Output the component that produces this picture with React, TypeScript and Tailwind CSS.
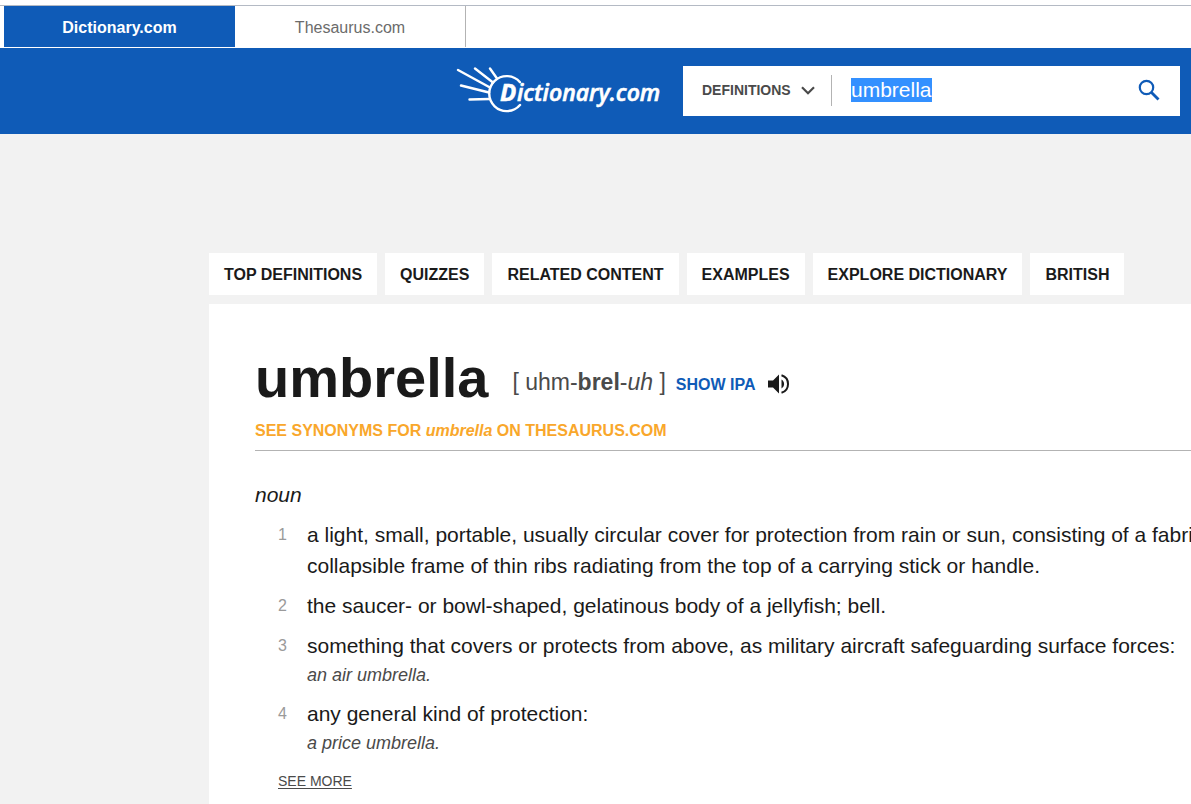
import React, { useEffect, useRef, useState } from "react";

type Definition = {
  text: string;
  example?: string;
};

const SECTIONS = [
  "TOP DEFINITIONS",
  "QUIZZES",
  "RELATED CONTENT",
  "EXAMPLES",
  "EXPLORE DICTIONARY",
  "BRITISH",
];

const DEFINITIONS: Definition[] = [
  {
    text: "a light, small, portable, usually circular cover for protection from rain or sun, consisting of a fabric collapsible frame of thin ribs radiating from the top of a carrying stick or handle.",
  },
  { text: "the saucer- or bowl-shaped, gelatinous body of a jellyfish; bell." },
  {
    text: "something that covers or protects from above, as military aircraft safeguarding surface forces:",
    example: "an air umbrella.",
  },
  { text: "any general kind of protection:", example: "a price umbrella." },
];

const Logo = () => (
  <svg width="206" height="48" viewBox="0 0 206 48" role="img" aria-label="Dictionary.com">
    <g fill="none" stroke="#fff" strokeWidth="2.4" strokeLinecap="round">
      <path d="M64 15.2A17.5 17.5 0 1 0 64 38" />
      <path d="M2 3 34 20.5M19 1.5 37 15.5M34 1.5 41 11.5M5 18.5 33 25.5M13.5 32.5 33.5 32" />
    </g>
    <g
      fill="#fff"
      stroke="#fff"
      fontFamily="'Open Sans', 'Noto Sans', sans-serif"
      fontStyle="italic"
      fontWeight="600"
    >
      <text x="44" y="34" fontSize="24" fontWeight="700" strokeWidth="0.6">
        D
      </text>
      <text x="61" y="34" fontSize="23" strokeWidth="0.6">
        ictionary.com
      </text>
    </g>
  </svg>
);

const SearchBar = () => {
  const [query, setQuery] = useState("umbrella");
  const inputRef = useRef<HTMLInputElement>(null);

  useEffect(() => {
    inputRef.current?.focus();
    inputRef.current?.select();
  }, []);

  return (
    <form
      className="flex h-[50px] w-[497px] items-center bg-white pb-0.5"
      onSubmit={(e) => e.preventDefault()}
    >
      <div className="flex h-[31px] items-center border-r border-[#b3b3b3] pr-4 pl-[19px]">
        <select
          aria-label="Search in"
          className="w-[93px] appearance-none bg-transparent text-sm font-bold text-[#4a4a4a]"
        >
          <option>DEFINITIONS</option>
          <option>SYNONYMS</option>
        </select>
        <svg className="ml-[6px] pointer-events-none" width="14" height="9" viewBox="0 0 14 9">
          <path d="M1 1.2 7 7.2 13 1.2" fill="none" stroke="#4a4a4a" strokeWidth="2.2" />
        </svg>
      </div>
      <input
        ref={inputRef}
        type="text"
        aria-label="Search"
        value={query}
        onChange={(e) => setQuery(e.target.value)}
        className="ml-[19px] min-w-0 flex-1 text-[21px] leading-6 text-[#1a1a1a] outline-none selection:bg-[#3390ff] selection:text-white"
      />
      <button type="submit" aria-label="Submit search" className="mr-5">
        <svg width="22" height="22" viewBox="0 0 22 22" fill="none" stroke="#0f5bb7">
          <circle cx="8.5" cy="8.5" r="6.7" strokeWidth="2.2" />
          <path d="M13.5 13.5 20.5 20.5" strokeWidth="2.8" />
        </svg>
      </button>
    </form>
  );
};

const SpeakerIcon = () => (
  <svg width="22" height="22" viewBox="0 0 22 22">
    <path d="M0 7.5V14.5H5L11 20.5V1.5L5 7.5Z" fill="#1a1a1a" />
    <path d="M13.5 6.5A5.2 5.2 0 0 1 13.5 15.5Z" fill="#1a1a1a" />
    <path d="M13.5 2.2A9.2 9.2 0 0 1 13.5 19.8" fill="none" stroke="#1a1a1a" strokeWidth="2" />
  </svg>
);

const App = () => {
  return (
    <div className="flex min-h-screen flex-col overflow-hidden bg-[#f2f2f2] font-['Liberation_Sans',Arial,sans-serif] text-[#1a1a1a]">
      <div className="bg-white pt-[5px]">
        <nav className="flex border-t border-[#b4bac4] pb-px pl-1 text-base leading-6">
          <a href="#dictionary" className="flex h-[41px] w-[231px] items-center justify-center bg-[#0f5bb7] pt-0.5 font-bold text-white">
            Dictionary.com
          </a>
          <a href="#thesaurus" className="flex h-[41px] w-[231px] items-center justify-center border-r border-[#b3b3b3] pt-0.5 text-[#6b6b6b]">
            Thesaurus.com
          </a>
        </nav>
      </div>

      <header className="flex items-center justify-end gap-[21px] bg-[#0f5bb7] py-[18px] pr-[11px]">
        <a href="#home">
          <Logo />
        </a>
        <SearchBar />
      </header>

      <main className="flex flex-1 flex-col pt-[119px] pl-[209px]">
        <nav className="flex gap-2">
          {SECTIONS.map((section) => (
            <a
              key={section}
              href="#sections"
              className="bg-white px-[15px] pt-[10px] pb-2 text-base leading-6 font-bold whitespace-nowrap"
            >
              {section}
            </a>
          ))}
        </nav>

        <article className="mt-[9px] min-w-[1020px] flex-1 bg-white pt-[42px] pl-[46px]">
          <div className="flex items-center">
            <h1 className="text-[56px] leading-[64px] font-bold">umbrella</h1>
            <div className="ml-6 flex items-baseline pt-2">
              <p className="text-[23px] leading-8 text-[#4a4a4a]">
                [ uhm-<b>brel</b>-<i>uh</i> ]
              </p>
              <button type="button" className="ml-[10px] text-base font-bold text-[#0f5bb7]">
                SHOW IPA
              </button>
            </div>
            <button type="button" aria-label="Play pronunciation" className="ml-3 pt-3">
              <SpeakerIcon />
            </button>
          </div>
          <div className="mt-[9px] border-b border-[#b3b3b3] pb-[7px] text-base leading-6 font-bold text-[#f9a72b]">
            <a href="#synonyms">
              SEE SYNONYMS FOR <i>umbrella</i> ON THESAURUS.COM
            </a>
          </div>

          <h2 className="mt-[29px] text-[21px] leading-[30px] italic">noun</h2>
          <ol className="mt-[9px] flex flex-col gap-[9px] pr-5 pl-[23px]">
            {DEFINITIONS.map((definition, index) => (
              <li key={definition.text} className="flex">
                <span className="w-[29px] shrink-0 text-base leading-[31px] text-[#9a9a9a]">
                  {index + 1}
                </span>
                <div className="text-[21px] leading-[31px]">
                  <p>{definition.text}</p>
                  {definition.example && (
                    <p className="text-lg leading-7 text-[#4a4a4a] italic">
                      {definition.example}
                    </p>
                  )}
                </div>
              </li>
            ))}
          </ol>
          <button
            type="button"
            className="mt-[14px] ml-[23px] text-sm leading-5 text-[#4a4a4a] underline underline-offset-2"
          >
            SEE MORE
          </button>
        </article>
      </main>
    </div>
  );
};

export default App;
